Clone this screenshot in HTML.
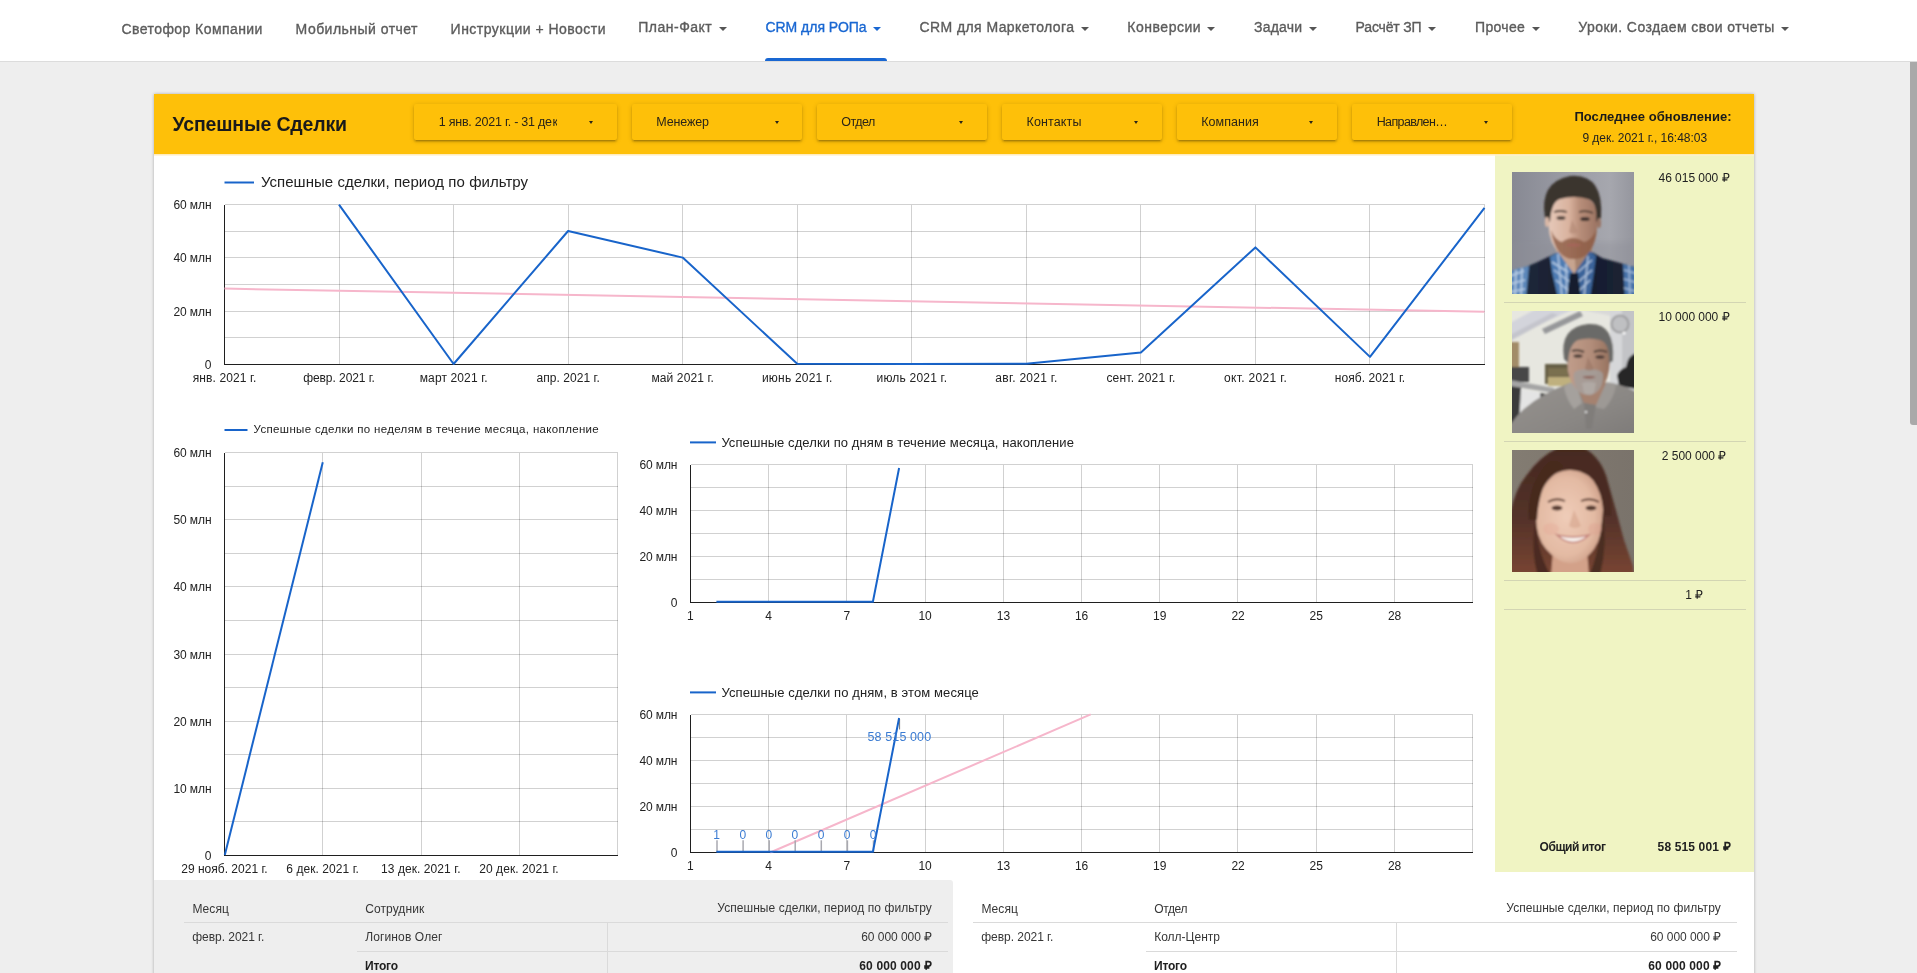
<!DOCTYPE html>
<html lang="ru"><head><meta charset="utf-8"><title>Успешные Сделки</title>
<style>
html,body{margin:0;padding:0}
body{width:1917px;height:973px;overflow:hidden;background:#eeeeee;font-family:"Liberation Sans",sans-serif;position:relative}
.t{position:absolute;white-space:nowrap}
#page{position:absolute;left:0;top:0;width:1917px;height:973px;overflow:hidden;will-change:transform}
.rub{display:inline-block;vertical-align:baseline;overflow:visible}
#topnav{position:absolute;left:0;top:0;width:1917px;height:61px;background:#fff;border-bottom:1px solid #dcdcdc}
#active-ul{position:absolute;left:765px;top:58px;width:122px;height:3px;background:#1967d2;border-radius:3px 3px 0 0}
.caret{position:absolute;width:0;height:0;border-left:4.6px solid transparent;border-right:4.6px solid transparent;border-top:4.9px solid #5f6368}
#scroll{position:absolute;left:1910px;top:62px;width:8px;height:363px;background:#a9a9a9;border-radius:0 0 0 3px}
#canvas{position:absolute;left:153.5px;top:94px;width:1600.6px;height:900px;background:#fff;box-shadow:0 0 3px rgba(0,0,0,.28)}
#bar{position:absolute;left:153.5px;top:94px;width:1600.6px;height:60px;background:#fec009}
#barsh{position:absolute;left:153.5px;top:154px;width:1600.6px;height:2px;background:linear-gradient(to bottom,rgba(255,231,173,1),rgba(255,246,222,.55))}
.flt{position:absolute;top:104px;height:35.6px;background:#fec009;border-radius:2px;box-shadow:0 2px 2px rgba(0,0,0,.14),0 3px 1px -2px rgba(0,0,0,.12),0 1px 5px rgba(0,0,0,.18)}
.fcaret{position:absolute;top:17px;width:0;height:0;border-left:2.8px solid transparent;border-right:2.8px solid transparent;border-top:3px solid #2a2418}
#side{position:absolute;left:1495px;top:154px;width:259px;height:718px;background:#f0f4c3}
.sep{position:absolute;left:9px;width:242px;height:1px;background:#d3d5b3}
.photo{position:absolute;left:17px;width:122px;height:122px;overflow:hidden}
#tbl1bg{position:absolute;left:154px;top:880px;width:799px;height:100px;background:#eeeeee;border-radius:0 3px 0 0}
.hl{position:absolute;height:1px;background:#dadada}
.vl{position:absolute;width:1px;background:#dadada}
#charts{position:absolute;left:0;top:0}
</style></head>
<body>
<div id="page">
<div id="canvas"></div>
<div id="bar"></div>
<div class="t" id="t11" style="top:115px;font-size:19.5px;line-height:19.5px;color:#1a1a1a;font-weight:700;letter-spacing:-0.169px;left:172.6px;">Успешные Сделки</div>
<div class="t" id="t18" style="top:110px;font-size:13px;line-height:13px;color:#1a1a1a;font-weight:700;letter-spacing:0.053px;left:1574.4px;">Последнее обновление:</div>
<div class="t" id="t19" style="top:132px;font-size:12px;line-height:12px;color:#212121;letter-spacing:-0.025px;left:1582.4px;">9 дек. 2021 г., 16:48:03</div>
<div class="flt" style="left:414px;width:203px"><span class="fcaret" style="left:175.3px"></span></div>
<div class="flt" style="left:632px;width:170px"><span class="fcaret" style="left:142.6px"></span></div>
<div class="flt" style="left:817px;width:170px"><span class="fcaret" style="left:142.2px"></span></div>
<div class="flt" style="left:1002px;width:160px"><span class="fcaret" style="left:132.3px"></span></div>
<div class="flt" style="left:1177px;width:160px"><span class="fcaret" style="left:132.2px"></span></div>
<div class="flt" style="left:1352px;width:160px"><span class="fcaret" style="left:132.1px"></span></div>
<div class="t" id="t12" style="top:116px;font-size:12.5px;line-height:12.5px;color:#2a2418;letter-spacing:-0.238px;left:438.8px;">1 янв. 2021 г. - 31 де</div>
<div class="t" id="t13" style="top:116px;font-size:12.5px;line-height:12.5px;color:#2a2418;letter-spacing:-0.133px;left:656.3px;">Менежер</div>
<div class="t" id="t14" style="top:116px;font-size:12.5px;line-height:12.5px;color:#2a2418;letter-spacing:-0.543px;left:841.3px;">Отдел</div>
<div class="t" id="t15" style="top:116px;font-size:12.5px;line-height:12.5px;color:#2a2418;letter-spacing:0.129px;left:1026.5px;">Контакты</div>
<div class="t" id="t16" style="top:116px;font-size:12.5px;line-height:12.5px;color:#2a2418;letter-spacing:0.028px;left:1201.3px;">Компания</div>
<div class="t" id="t17" style="top:116px;font-size:12.5px;line-height:12.5px;color:#2a2418;letter-spacing:-0.628px;left:1376.7px;">Направлен…</div>
<div class="t" style="left:552.4px;top:116px;width:4.2px;overflow:hidden;font-size:12.5px;line-height:12.5px;color:#2a2418">к</div>
<div id="side">
<div class="photo" style="top:18px"><svg width="122" height="122" viewBox="0 0 122 122">
<defs>
<filter id="pb1" x="-10%" y="-10%" width="120%" height="120%"><feGaussianBlur stdDeviation="1.1"/></filter>
<filter id="pb1b" x="-20%" y="-20%" width="140%" height="140%"><feGaussianBlur stdDeviation="2.4"/></filter>
<linearGradient id="pg1" x1="0" x2="1"><stop offset="0" stop-color="#878993"/><stop offset=".45" stop-color="#9a9ba4"/><stop offset=".8" stop-color="#a6a7ae"/><stop offset="1" stop-color="#95969e"/></linearGradient>
<linearGradient id="pf1" x1="0" x2="1"><stop offset="0" stop-color="#e6c9b9"/><stop offset=".42" stop-color="#d9b29e"/><stop offset=".62" stop-color="#b98f7b"/><stop offset="1" stop-color="#9c7462"/></linearGradient>
<linearGradient id="pv1" x1="0" x2="1"><stop offset="0" stop-color="#232c40"/><stop offset=".5" stop-color="#161c2c"/><stop offset="1" stop-color="#1c2336"/></linearGradient>
</defs>
<rect width="122" height="122" fill="url(#pg1)"/>
<rect y="70" width="122" height="52" fill="#8d8e97" opacity=".35" filter="url(#pb1b)"/>
<g filter="url(#pb1)">
<path d="M-4,126 L-4,101 Q14,96 36,85 L46,80 L80,80 L90,86 Q112,92 126,96 L126,126Z" fill="url(#pv1)"/>
<path d="M-4,126 L-4,100 Q6,96 17,94 L14,126Z" fill="#5c87ba"/>
<path d="M-2,104 L12,99 M-2,112 L13,108 M-2,120 L13,117 M4,98 L3,126 M10,96 L9,126" stroke="#d5e2f2" stroke-width="1.6" fill="none" opacity=".8"/>
<path d="M126,126 L126,96 Q119,94 111,92 L113,126Z" fill="#4772a8"/>
<path d="M112,98 L126,102 M112,107 L126,111 M112,116 L126,120 M117,93 L118,126" stroke="#c9d9ee" stroke-width="1.5" fill="none" opacity=".7"/>
<path d="M44,70 L80,70 L80,90 L62,104 L45,92Z" fill="#c7a48f"/>
<path d="M62,74 L80,72 L80,90 L64,102Z" fill="#9a7560" opacity=".7"/>
<path d="M38,85 L46,80 L62,102 L58,126 L46,126 L40,100Z" fill="#4d7cb3"/>
<path d="M84,84 L78,79 L62,102 L66,126 L78,126 L82,100Z" fill="#3a639a"/>
<path d="M40,90 L56,100 M42,98 L58,110 M44,108 L58,120 M46,82 L50,126 M54,92 L55,126 M80,88 L66,100 M80,98 L66,110 M78,108 L66,120 M76,84 L72,126" stroke="#dbe7f5" stroke-width="1.5" fill="none" opacity=".75"/>
<path d="M58,101 L66,101 L69,126 L55,126Z" fill="#141b2e"/>
<path d="M37,44 Q35,64 43,76 Q52,88 62,87 Q73,87 80,76 Q87,62 85,42 Q84,24 61,23 Q38,24 37,44Z" fill="url(#pf1)"/>
<path d="M39,58 Q41,72 47,80 Q54,88 62,87 Q71,88 78,79 Q84,70 84,58 Q80,68 72,70 Q66,66 61,66 Q55,66 50,70 Q43,68 39,58Z" fill="#8a5a42" opacity=".78"/>
<path d="M53,73 Q61,70 70,73 Q61,76 53,73Z" fill="#a6655a"/>
<path d="M33,46 Q27,10 58,4 Q92,1 89,46 L84,50 Q86,30 76,27 Q62,23 48,27 Q39,30 38,50Z" fill="#3a342f"/>
<path d="M42,40 Q48,38 55,40 M67,40 Q74,38 81,41" stroke="#4a3a32" stroke-width="1.8" fill="none"/>
<ellipse cx="49" cy="46" rx="4.5" ry="1.9" fill="#55463f"/><ellipse cx="73" cy="47" rx="4.8" ry="2" fill="#3e322e"/>
<path d="M60,48 L57,60 Q61,63 66,60Z" fill="#b58c78" opacity=".7"/>
<ellipse cx="35" cy="50" rx="2.2" ry="5" fill="#d9b7a6"/><ellipse cx="87" cy="51" rx="2" ry="5" fill="#9a7464"/>
</g></svg></div>
<div class="photo" style="top:157px"><svg width="122" height="122" viewBox="0 0 122 122">
<defs><filter id="pb2" x="-10%" y="-10%" width="120%" height="120%"><feGaussianBlur stdDeviation="1.1"/></filter>
<linearGradient id="pf2" x1="0" x2="1"><stop offset="0" stop-color="#c09d8b"/><stop offset=".55" stop-color="#b28d7a"/><stop offset="1" stop-color="#96725f"/></linearGradient>
<linearGradient id="ps2" x1="0" y1="0" x2="1" y2="1"><stop offset="0" stop-color="#97938f"/><stop offset=".6" stop-color="#8a8784"/><stop offset="1" stop-color="#7d7a78"/></linearGradient>
</defs>
<rect width="122" height="122" fill="#e7e7e0"/>
<g filter="url(#pb2)">
<path d="M-2,-2 L124,-2 L124,10 L66,-2Z" fill="#d9d9d8"/>
<path d="M-2,12 L24,-2 L62,-2 L-2,27Z" fill="#d3d4db"/>
<path d="M-2,24 L40,2 L46,4 L-2,30Z" fill="#c4c5cc"/>
<path d="M30,18 L68,0 L71,5 L33,23Z" fill="#96979a"/>
<rect x="98" y="-2" width="28" height="84" fill="#d6d7d9"/>
<rect x="110" y="-2" width="14" height="60" fill="#c3c4c7"/>
<circle cx="108" cy="13" r="8.5" fill="#bfc0c2" stroke="#9c9c9e" stroke-width="2"/>
<circle cx="112" cy="22" r="1.6" fill="#fff"/>
<rect x="-2" y="31" width="9" height="25" fill="#a28c68"/>
<rect x="-2" y="56" width="19" height="15" fill="#474747"/>
<rect x="-2" y="71" width="11" height="42" fill="#3b3b3b"/>
<rect x="33" y="53" width="25" height="20" fill="#655d45"/>
<rect x="36" y="57" width="20" height="8" fill="#7a7050"/>
<rect x="36" y="66" width="24" height="9" fill="#bfb07e"/>
<path d="M-2,69 L42,77 L42,82 L-2,75Z" fill="#a4a4a4"/>
<path d="M9,78 L30,82 L26,112 L7,112Z" fill="#e4e4e4"/>
<path d="M28,82 L40,84 L38,92 L29,90Z" fill="#3d3d3d"/>
<path d="M105,64 Q108,58 114,56 Q116,44 124,42 L124,78 L107,75Z" fill="#262626"/>
<path d="M-4,126 L-2,114 Q10,96 32,84 Q44,77 58,72 L100,72 Q114,75 126,82 L126,126Z" fill="url(#ps2)"/>
<path d="M52,76 Q58,70 64,72 L70,92 L62,98 Q54,88 52,76Z" fill="#a5a19d"/>
<path d="M104,74 Q98,70 92,72 L82,96 L92,98 Q102,88 104,74Z" fill="#9d9995"/>
<path d="M64,74 L94,72 L84,94 L72,92Z" fill="#a5826f"/>
<path d="M72,92 L84,94 L80,118 L74,118Z" fill="#807d7a"/>
<circle cx="74" cy="101" r="1.3" fill="#d8d8d8"/>
<path d="M56,44 Q54,62 60,72 Q68,85 77,84 Q87,84 93,72 Q99,60 98,42 Q96,25 77,25 Q58,26 56,44Z" fill="url(#pf2)"/>
<path d="M62,62 Q64,58 77,58 Q89,58 91,63 Q92,74 86,80 Q80,85 76,84 Q68,84 64,77 Q61,70 62,62Z" fill="#a39e9b" opacity=".8"/>
<path d="M67,62 Q77,57 87,62 Q77,65 67,62Z" fill="#a59c96"/>
<path d="M70,66 Q77,64 84,66 Q77,69 70,66Z" fill="#8c6258"/>
<path d="M70,72 Q77,70 84,72 L82,82 Q77,85 72,82Z" fill="#b3aca8" opacity=".8"/>
<path d="M52,48 Q47,16 76,13 Q104,11 101,50 L97,52 Q98,32 88,29 Q77,26 66,29 Q57,33 56,52Z" fill="#6b6a68"/>
<path d="M60,40 Q66,38 72,41 M82,41 Q88,38 95,41" stroke="#4a3c36" stroke-width="2" fill="none"/>
<ellipse cx="66" cy="45" rx="4.6" ry="1.8" fill="#4e3d37"/><ellipse cx="88" cy="46" rx="4.6" ry="1.8" fill="#4e3d37"/>
<path d="M76,46 L73,58 Q77,61 82,58Z" fill="#9d7867" opacity=".7"/>
</g></svg></div>
<div class="photo" style="top:296px"><svg width="122" height="122" viewBox="0 0 122 122">
<defs><filter id="pb3" x="-10%" y="-10%" width="120%" height="120%"><feGaussianBlur stdDeviation="1.1"/></filter>
<radialGradient id="pf3" cx=".45" cy=".5" r=".6"><stop offset="0" stop-color="#efccb8"/><stop offset=".7" stop-color="#e3baa3"/><stop offset="1" stop-color="#cb9c86"/></radialGradient>
<linearGradient id="ph3" x1="0" y1="0" x2="0" y2="1"><stop offset="0" stop-color="#46291f"/><stop offset=".55" stop-color="#54322a"/><stop offset="1" stop-color="#7a4632"/></linearGradient>
<linearGradient id="pg3" x1="0" x2="1"><stop offset="0" stop-color="#837c72"/><stop offset="1" stop-color="#7a736b"/></linearGradient>
</defs>
<rect width="122" height="122" fill="url(#pg3)"/>
<g filter="url(#pb3)">
<path d="M-4,126 L-3,70 Q2,40 14,26 Q28,6 46,-2 L72,-2 Q90,8 96,32 Q104,60 112,90 L121,116 L122,126Z" fill="url(#ph3)"/>
<path d="M41,100 L75,100 L77,126 L39,126Z" fill="#d3a189"/>
<path d="M24,62 Q23,86 34,99 Q46,113 58,113 Q72,113 82,99 Q92,84 91,60 Q90,36 77,26 Q60,15 43,24 Q27,36 24,62Z" fill="url(#pf3)"/>
<path d="M52,17 Q38,22 31,38 Q26,52 25,70 L17,70 Q14,38 34,14 Q44,6 52,17Z" fill="#47291f"/>
<path d="M50,18 Q68,14 81,30 Q91,44 92,66 L99,66 Q100,36 86,18 Q68,4 50,18Z" fill="#4a2c22"/>
<path d="M91,60 Q96,92 88,126 L77,126 Q88,100 91,60Z" fill="#4b2d23"/>
<path d="M24,68 Q24,100 39,126 L26,126 Q18,100 24,68Z" fill="#4b2c22"/>
<path d="M36,52 Q44,47 53,51 M69,51 Q78,47 87,52" stroke="#5a3a2e" stroke-width="1.9" fill="none"/>
<ellipse cx="45" cy="58" rx="5.4" ry="2.4" fill="#54392f"/><ellipse cx="79" cy="58" rx="5.4" ry="2.4" fill="#54392f"/>
<path d="M62,60 L57,76 Q63,80 69,76Z" fill="#d6a48c" opacity=".6"/>
<ellipse cx="39" cy="79" rx="8" ry="6" fill="#e6a696" opacity=".35"/><ellipse cx="83" cy="79" rx="7" ry="6" fill="#dd9d8d" opacity=".35"/>
<path d="M45,85 Q61,100 77,85 Q61,89 45,85Z" fill="#f7f1ec" stroke="#c4827a" stroke-width="1.6"/>
</g></svg></div>
<div class="sep" style="top:148px"></div>
<div class="sep" style="top:287px"></div>
<div class="sep" style="top:426px"></div>
<div class="sep" style="top:455px"></div>
</div>
<div class="t" id="t86" style="top:172px;font-size:12px;line-height:12px;color:#212121;letter-spacing:-0.037px;left:1393.8px;width:600px;text-align:center;">46 015 000 <svg class="rub" width="7.5" height="8.7" viewBox="0 0 7.5 8.7" aria-label="₽"><path d="M2.2,8.7 V0.55 H4.6 A2.25,2.25 0 0 1 4.6,5.05 H0.2 M0.2,6.95 H5.4" fill="none" stroke="currentColor" stroke-width="1.15"/></svg></div>
<div class="t" id="t87" style="top:311px;font-size:12px;line-height:12px;color:#212121;letter-spacing:-0.037px;left:1393.8px;width:600px;text-align:center;">10 000 000 <svg class="rub" width="7.5" height="8.7" viewBox="0 0 7.5 8.7" aria-label="₽"><path d="M2.2,8.7 V0.55 H4.6 A2.25,2.25 0 0 1 4.6,5.05 H0.2 M0.2,6.95 H5.4" fill="none" stroke="currentColor" stroke-width="1.15"/></svg></div>
<div class="t" id="t88" style="top:450px;font-size:12px;line-height:12px;color:#212121;letter-spacing:-0.022px;left:1393.8px;width:600px;text-align:center;">2 500 000 <svg class="rub" width="7.5" height="8.7" viewBox="0 0 7.5 8.7" aria-label="₽"><path d="M2.2,8.7 V0.55 H4.6 A2.25,2.25 0 0 1 4.6,5.05 H0.2 M0.2,6.95 H5.4" fill="none" stroke="currentColor" stroke-width="1.15"/></svg></div>
<div class="t" id="t89" style="top:589px;font-size:12px;line-height:12px;color:#212121;letter-spacing:-0.258px;left:1393.8px;width:600px;text-align:center;">1 <svg class="rub" width="7.5" height="8.7" viewBox="0 0 7.5 8.7" aria-label="₽"><path d="M2.2,8.7 V0.55 H4.6 A2.25,2.25 0 0 1 4.6,5.05 H0.2 M0.2,6.95 H5.4" fill="none" stroke="currentColor" stroke-width="1.15"/></svg></div>
<div class="t" id="t90" style="top:841px;font-size:12px;line-height:12px;color:#212121;font-weight:700;letter-spacing:-0.432px;left:1539.5px;">Общий итог</div>
<div class="t" id="t91" style="top:841px;font-size:12px;line-height:12px;color:#212121;font-weight:700;letter-spacing:0.136px;right:187.0px;">58 515 001 <svg class="rub" width="7.5" height="8.7" viewBox="0 0 7.5 8.7" aria-label="₽"><path d="M2.2,8.7 V0.55 H4.6 A2.25,2.25 0 0 1 4.6,5.05 H0.2 M0.2,6.95 H5.4" fill="none" stroke="currentColor" stroke-width="1.7"/></svg></div>
<div id="barsh"></div>
<svg id="charts" width="1917" height="973" viewBox="0 0 1917 973">
<g id="chart1" shape-rendering="crispEdges">
<line x1="224.5" y1="204.5" x2="1484.5" y2="204.5" stroke="rgba(0,0,0,.18)" stroke-width="1"/>
<line x1="224.5" y1="231.5" x2="1484.5" y2="231.5" stroke="rgba(0,0,0,.18)" stroke-width="1"/>
<line x1="224.5" y1="257.5" x2="1484.5" y2="257.5" stroke="rgba(0,0,0,.18)" stroke-width="1"/>
<line x1="224.5" y1="284.5" x2="1484.5" y2="284.5" stroke="rgba(0,0,0,.18)" stroke-width="1"/>
<line x1="224.5" y1="311.5" x2="1484.5" y2="311.5" stroke="rgba(0,0,0,.18)" stroke-width="1"/>
<line x1="224.5" y1="337.5" x2="1484.5" y2="337.5" stroke="rgba(0,0,0,.18)" stroke-width="1"/>
<line x1="224.5" y1="364.5" x2="1484.5" y2="364.5" stroke="rgba(0,0,0,.18)" stroke-width="1"/>
<line x1="339.5" y1="204.5" x2="339.5" y2="364.5" stroke="rgba(0,0,0,.18)" stroke-width="1"/>
<line x1="453.5" y1="204.5" x2="453.5" y2="364.5" stroke="rgba(0,0,0,.18)" stroke-width="1"/>
<line x1="568.5" y1="204.5" x2="568.5" y2="364.5" stroke="rgba(0,0,0,.18)" stroke-width="1"/>
<line x1="682.5" y1="204.5" x2="682.5" y2="364.5" stroke="rgba(0,0,0,.18)" stroke-width="1"/>
<line x1="797.5" y1="204.5" x2="797.5" y2="364.5" stroke="rgba(0,0,0,.18)" stroke-width="1"/>
<line x1="911.5" y1="204.5" x2="911.5" y2="364.5" stroke="rgba(0,0,0,.18)" stroke-width="1"/>
<line x1="1026.5" y1="204.5" x2="1026.5" y2="364.5" stroke="rgba(0,0,0,.18)" stroke-width="1"/>
<line x1="1140.5" y1="204.5" x2="1140.5" y2="364.5" stroke="rgba(0,0,0,.18)" stroke-width="1"/>
<line x1="1255.5" y1="204.5" x2="1255.5" y2="364.5" stroke="rgba(0,0,0,.18)" stroke-width="1"/>
<line x1="1369.5" y1="204.5" x2="1369.5" y2="364.5" stroke="rgba(0,0,0,.18)" stroke-width="1"/>
<line x1="1484.5" y1="204.5" x2="1484.5" y2="364.5" stroke="rgba(0,0,0,.18)" stroke-width="1"/>
<line x1="224.5" y1="204.5" x2="224.5" y2="365.0" stroke="#1f1f1f" stroke-width="1"/>
<line x1="224.5" y1="364.5" x2="1484.5" y2="364.5" stroke="#1f1f1f" stroke-width="1"/>
</g>
<line x1="224.5" y1="288.6" x2="1484.5" y2="311.8" stroke="#f6b6cb" stroke-width="2"/>
<polyline fill="none" stroke="#1864ca" stroke-width="2" stroke-linejoin="round" points="339.0,204.6 453.6,364.0 568.1,231.0 682.7,257.6 797.2,363.8 911.8,364.0 1026.3,363.8 1140.9,352.6 1255.4,247.4 1370.0,356.9 1484.5,207.9"/>
<line x1="224.5" y1="182.5" x2="254" y2="182.5" stroke="#1864ca" stroke-width="2"/>
<g id="chart2" shape-rendering="crispEdges">
<line x1="224.5" y1="452.5" x2="617.5" y2="452.5" stroke="rgba(0,0,0,.18)" stroke-width="1"/>
<line x1="224.5" y1="486.5" x2="617.5" y2="486.5" stroke="rgba(0,0,0,.18)" stroke-width="1"/>
<line x1="224.5" y1="519.5" x2="617.5" y2="519.5" stroke="rgba(0,0,0,.18)" stroke-width="1"/>
<line x1="224.5" y1="553.5" x2="617.5" y2="553.5" stroke="rgba(0,0,0,.18)" stroke-width="1"/>
<line x1="224.5" y1="586.5" x2="617.5" y2="586.5" stroke="rgba(0,0,0,.18)" stroke-width="1"/>
<line x1="224.5" y1="620.5" x2="617.5" y2="620.5" stroke="rgba(0,0,0,.18)" stroke-width="1"/>
<line x1="224.5" y1="654.5" x2="617.5" y2="654.5" stroke="rgba(0,0,0,.18)" stroke-width="1"/>
<line x1="224.5" y1="687.5" x2="617.5" y2="687.5" stroke="rgba(0,0,0,.18)" stroke-width="1"/>
<line x1="224.5" y1="721.5" x2="617.5" y2="721.5" stroke="rgba(0,0,0,.18)" stroke-width="1"/>
<line x1="224.5" y1="754.5" x2="617.5" y2="754.5" stroke="rgba(0,0,0,.18)" stroke-width="1"/>
<line x1="224.5" y1="788.5" x2="617.5" y2="788.5" stroke="rgba(0,0,0,.18)" stroke-width="1"/>
<line x1="224.5" y1="821.5" x2="617.5" y2="821.5" stroke="rgba(0,0,0,.18)" stroke-width="1"/>
<line x1="224.5" y1="855.5" x2="617.5" y2="855.5" stroke="rgba(0,0,0,.18)" stroke-width="1"/>
<line x1="322.5" y1="452.5" x2="322.5" y2="855.5" stroke="rgba(0,0,0,.18)" stroke-width="1"/>
<line x1="421.5" y1="452.5" x2="421.5" y2="855.5" stroke="rgba(0,0,0,.18)" stroke-width="1"/>
<line x1="519.5" y1="452.5" x2="519.5" y2="855.5" stroke="rgba(0,0,0,.18)" stroke-width="1"/>
<line x1="617.5" y1="452.5" x2="617.5" y2="855.5" stroke="rgba(0,0,0,.18)" stroke-width="1"/>
<line x1="224.5" y1="452.5" x2="224.5" y2="856.0" stroke="#1f1f1f" stroke-width="1"/>
<line x1="224.5" y1="855.5" x2="617.5" y2="855.5" stroke="#1f1f1f" stroke-width="1"/>
</g>
<line x1="224.8" y1="855" x2="322.8" y2="462.3" stroke="#1864ca" stroke-width="2"/>
<line x1="224.5" y1="430" x2="247.5" y2="430" stroke="#1864ca" stroke-width="2"/>
<g id="chart3" shape-rendering="crispEdges">
<line x1="690.5" y1="464.5" x2="1472.5" y2="464.5" stroke="rgba(0,0,0,.18)" stroke-width="1"/>
<line x1="690.5" y1="487.5" x2="1472.5" y2="487.5" stroke="rgba(0,0,0,.18)" stroke-width="1"/>
<line x1="690.5" y1="510.5" x2="1472.5" y2="510.5" stroke="rgba(0,0,0,.18)" stroke-width="1"/>
<line x1="690.5" y1="533.5" x2="1472.5" y2="533.5" stroke="rgba(0,0,0,.18)" stroke-width="1"/>
<line x1="690.5" y1="556.5" x2="1472.5" y2="556.5" stroke="rgba(0,0,0,.18)" stroke-width="1"/>
<line x1="690.5" y1="579.5" x2="1472.5" y2="579.5" stroke="rgba(0,0,0,.18)" stroke-width="1"/>
<line x1="690.5" y1="602.5" x2="1472.5" y2="602.5" stroke="rgba(0,0,0,.18)" stroke-width="1"/>
<line x1="768.5" y1="464.5" x2="768.5" y2="602.5" stroke="rgba(0,0,0,.18)" stroke-width="1"/>
<line x1="846.5" y1="464.5" x2="846.5" y2="602.5" stroke="rgba(0,0,0,.18)" stroke-width="1"/>
<line x1="925.5" y1="464.5" x2="925.5" y2="602.5" stroke="rgba(0,0,0,.18)" stroke-width="1"/>
<line x1="1003.5" y1="464.5" x2="1003.5" y2="602.5" stroke="rgba(0,0,0,.18)" stroke-width="1"/>
<line x1="1081.5" y1="464.5" x2="1081.5" y2="602.5" stroke="rgba(0,0,0,.18)" stroke-width="1"/>
<line x1="1159.5" y1="464.5" x2="1159.5" y2="602.5" stroke="rgba(0,0,0,.18)" stroke-width="1"/>
<line x1="1237.5" y1="464.5" x2="1237.5" y2="602.5" stroke="rgba(0,0,0,.18)" stroke-width="1"/>
<line x1="1316.5" y1="464.5" x2="1316.5" y2="602.5" stroke="rgba(0,0,0,.18)" stroke-width="1"/>
<line x1="1394.5" y1="464.5" x2="1394.5" y2="602.5" stroke="rgba(0,0,0,.18)" stroke-width="1"/>
<line x1="1472.5" y1="464.5" x2="1472.5" y2="602.5" stroke="rgba(0,0,0,.18)" stroke-width="1"/>
<line x1="690.5" y1="464.5" x2="690.5" y2="603.0" stroke="#1f1f1f" stroke-width="1"/>
<line x1="690.5" y1="602.5" x2="1472.5" y2="602.5" stroke="#1f1f1f" stroke-width="1"/>
</g>
<polyline fill="none" stroke="#1864ca" stroke-width="2" stroke-linejoin="miter" points="716.4,601.8 872.9,601.8 899.1,468"/>
<line x1="690" y1="442.4" x2="716" y2="442.4" stroke="#1864ca" stroke-width="2"/>
<g id="chart4" shape-rendering="crispEdges">
<line x1="690.5" y1="714.5" x2="1472.5" y2="714.5" stroke="rgba(0,0,0,.18)" stroke-width="1"/>
<line x1="690.5" y1="737.5" x2="1472.5" y2="737.5" stroke="rgba(0,0,0,.18)" stroke-width="1"/>
<line x1="690.5" y1="760.5" x2="1472.5" y2="760.5" stroke="rgba(0,0,0,.18)" stroke-width="1"/>
<line x1="690.5" y1="783.5" x2="1472.5" y2="783.5" stroke="rgba(0,0,0,.18)" stroke-width="1"/>
<line x1="690.5" y1="806.5" x2="1472.5" y2="806.5" stroke="rgba(0,0,0,.18)" stroke-width="1"/>
<line x1="690.5" y1="829.5" x2="1472.5" y2="829.5" stroke="rgba(0,0,0,.18)" stroke-width="1"/>
<line x1="690.5" y1="852.5" x2="1472.5" y2="852.5" stroke="rgba(0,0,0,.18)" stroke-width="1"/>
<line x1="768.5" y1="714.5" x2="768.5" y2="852.5" stroke="rgba(0,0,0,.18)" stroke-width="1"/>
<line x1="846.5" y1="714.5" x2="846.5" y2="852.5" stroke="rgba(0,0,0,.18)" stroke-width="1"/>
<line x1="925.5" y1="714.5" x2="925.5" y2="852.5" stroke="rgba(0,0,0,.18)" stroke-width="1"/>
<line x1="1003.5" y1="714.5" x2="1003.5" y2="852.5" stroke="rgba(0,0,0,.18)" stroke-width="1"/>
<line x1="1081.5" y1="714.5" x2="1081.5" y2="852.5" stroke="rgba(0,0,0,.18)" stroke-width="1"/>
<line x1="1159.5" y1="714.5" x2="1159.5" y2="852.5" stroke="rgba(0,0,0,.18)" stroke-width="1"/>
<line x1="1237.5" y1="714.5" x2="1237.5" y2="852.5" stroke="rgba(0,0,0,.18)" stroke-width="1"/>
<line x1="1316.5" y1="714.5" x2="1316.5" y2="852.5" stroke="rgba(0,0,0,.18)" stroke-width="1"/>
<line x1="1394.5" y1="714.5" x2="1394.5" y2="852.5" stroke="rgba(0,0,0,.18)" stroke-width="1"/>
<line x1="1472.5" y1="714.5" x2="1472.5" y2="852.5" stroke="rgba(0,0,0,.18)" stroke-width="1"/>
<line x1="690.5" y1="714.5" x2="690.5" y2="853.0" stroke="#1f1f1f" stroke-width="1"/>
<line x1="690.5" y1="852.5" x2="1472.5" y2="852.5" stroke="#1f1f1f" stroke-width="1"/>
</g>
<line x1="770.2" y1="852.5" x2="1090.7" y2="714.4" stroke="#f6b6cb" stroke-width="2"/>
<line x1="899.6" y1="719" x2="899.6" y2="729.5" stroke="#777" stroke-width="1"/>
<line x1="717.0" y1="840.3" x2="717.0" y2="852" stroke="#a9a9b0" stroke-width="1.5"/>
<line x1="743.1" y1="840.3" x2="743.1" y2="852" stroke="#a9a9b0" stroke-width="1.5"/>
<line x1="769.2" y1="840.3" x2="769.2" y2="852" stroke="#a9a9b0" stroke-width="1.5"/>
<line x1="795.2" y1="840.3" x2="795.2" y2="852" stroke="#a9a9b0" stroke-width="1.5"/>
<line x1="821.3" y1="840.3" x2="821.3" y2="852" stroke="#a9a9b0" stroke-width="1.5"/>
<line x1="847.4" y1="840.3" x2="847.4" y2="852" stroke="#a9a9b0" stroke-width="1.5"/>
<line x1="873.5" y1="840.3" x2="873.5" y2="852" stroke="#a9a9b0" stroke-width="1.5"/>
<polyline fill="none" stroke="#1864ca" stroke-width="2" stroke-linejoin="miter" points="716.4,851.8 872.9,851.8 899.1,718"/>
<line x1="690" y1="692.4" x2="716" y2="692.4" stroke="#1864ca" stroke-width="2"/>
</svg>
<div class="t" id="t20" style="top:174px;font-size:15px;line-height:15px;color:#212121;letter-spacing:0.047px;left:260.9px;">Успешные сделки, период по фильтру</div>
<div class="t" id="t21" style="top:199px;font-size:12px;line-height:12px;color:#222222;letter-spacing:-0.113px;right:1705.6px;">60 млн</div>
<div class="t" id="t22" style="top:252px;font-size:12px;line-height:12px;color:#222222;letter-spacing:-0.113px;right:1705.6px;">40 млн</div>
<div class="t" id="t23" style="top:306px;font-size:12px;line-height:12px;color:#222222;letter-spacing:-0.113px;right:1705.6px;">20 млн</div>
<div class="t" id="t24" style="top:359px;font-size:12px;line-height:12px;color:#222222;right:1705.5px;">0</div>
<div class="t" id="t25" style="top:372px;font-size:12px;line-height:12px;color:#222222;letter-spacing:0.122px;left:-75.4px;width:600px;text-align:center;">янв. 2021 г.</div>
<div class="t" id="t26" style="top:372px;font-size:12px;line-height:12px;color:#222222;letter-spacing:-0.062px;left:39.0px;width:600px;text-align:center;">февр. 2021 г.</div>
<div class="t" id="t27" style="top:372px;font-size:12px;line-height:12px;color:#222222;letter-spacing:0.122px;left:153.7px;width:600px;text-align:center;">март 2021 г.</div>
<div class="t" id="t28" style="top:372px;font-size:12px;line-height:12px;color:#222222;letter-spacing:0.064px;left:268.2px;width:600px;text-align:center;">апр. 2021 г.</div>
<div class="t" id="t29" style="top:372px;font-size:12px;line-height:12px;color:#222222;letter-spacing:0.125px;left:382.7px;width:600px;text-align:center;">май 2021 г.</div>
<div class="t" id="t30" style="top:372px;font-size:12px;line-height:12px;color:#222222;letter-spacing:0.209px;left:497.3px;width:600px;text-align:center;">июнь 2021 г.</div>
<div class="t" id="t31" style="top:372px;font-size:12px;line-height:12px;color:#222222;letter-spacing:0.199px;left:611.9px;width:600px;text-align:center;">июль 2021 г.</div>
<div class="t" id="t32" style="top:372px;font-size:12px;line-height:12px;color:#222222;letter-spacing:0.281px;left:726.5px;width:600px;text-align:center;">авг. 2021 г.</div>
<div class="t" id="t33" style="top:372px;font-size:12px;line-height:12px;color:#222222;letter-spacing:0.215px;left:841.0px;width:600px;text-align:center;">сент. 2021 г.</div>
<div class="t" id="t34" style="top:372px;font-size:12px;line-height:12px;color:#222222;letter-spacing:0.348px;left:955.6px;width:600px;text-align:center;">окт. 2021 г.</div>
<div class="t" id="t35" style="top:372px;font-size:12px;line-height:12px;color:#222222;letter-spacing:0.073px;left:1070.0px;width:600px;text-align:center;">нояб. 2021 г.</div>
<div class="t" id="t36" style="top:424px;font-size:11.5px;line-height:11.5px;color:#212121;letter-spacing:0.338px;left:253.6px;">Успешные сделки по неделям в течение месяца, накопление</div>
<div class="t" id="t37" style="top:447px;font-size:12px;line-height:12px;color:#222222;letter-spacing:-0.113px;right:1705.6px;">60 млн</div>
<div class="t" id="t38" style="top:514px;font-size:12px;line-height:12px;color:#222222;letter-spacing:-0.113px;right:1705.6px;">50 млн</div>
<div class="t" id="t39" style="top:581px;font-size:12px;line-height:12px;color:#222222;letter-spacing:-0.113px;right:1705.6px;">40 млн</div>
<div class="t" id="t40" style="top:649px;font-size:12px;line-height:12px;color:#222222;letter-spacing:-0.113px;right:1705.6px;">30 млн</div>
<div class="t" id="t41" style="top:716px;font-size:12px;line-height:12px;color:#222222;letter-spacing:-0.113px;right:1705.6px;">20 млн</div>
<div class="t" id="t42" style="top:783px;font-size:12px;line-height:12px;color:#222222;letter-spacing:-0.113px;right:1705.6px;">10 млн</div>
<div class="t" id="t43" style="top:850px;font-size:12px;line-height:12px;color:#222222;right:1705.5px;">0</div>
<div class="t" id="t44" style="top:863px;font-size:12px;line-height:12px;color:#222222;letter-spacing:0.007px;left:-75.5px;width:600px;text-align:center;">29 нояб. 2021 г.</div>
<div class="t" id="t45" style="top:863px;font-size:12px;line-height:12px;color:#222222;letter-spacing:0.055px;left:22.7px;width:600px;text-align:center;">6 дек. 2021 г.</div>
<div class="t" id="t46" style="top:863px;font-size:12px;line-height:12px;color:#222222;letter-spacing:0.067px;left:120.8px;width:600px;text-align:center;">13 дек. 2021 г.</div>
<div class="t" id="t47" style="top:863px;font-size:12px;line-height:12px;color:#222222;letter-spacing:0.067px;left:219.0px;width:600px;text-align:center;">20 дек. 2021 г.</div>
<div class="t" id="t48" style="top:436px;font-size:13px;line-height:13px;color:#212121;letter-spacing:0.084px;left:721.4px;">Успешные сделки по дням в течение месяца, накопление</div>
<div class="t" id="t49" style="top:459px;font-size:12px;line-height:12px;color:#222222;letter-spacing:-0.113px;right:1239.7px;">60 млн</div>
<div class="t" id="t50" style="top:505px;font-size:12px;line-height:12px;color:#222222;letter-spacing:-0.113px;right:1239.7px;">40 млн</div>
<div class="t" id="t51" style="top:551px;font-size:12px;line-height:12px;color:#222222;letter-spacing:-0.113px;right:1239.7px;">20 млн</div>
<div class="t" id="t52" style="top:597px;font-size:12px;line-height:12px;color:#222222;right:1239.6px;">0</div>
<div class="t" id="t53" style="top:610px;font-size:12px;line-height:12px;color:#222222;left:390.4px;width:600px;text-align:center;">1</div>
<div class="t" id="t54" style="top:610px;font-size:12px;line-height:12px;color:#222222;left:468.6px;width:600px;text-align:center;">4</div>
<div class="t" id="t55" style="top:610px;font-size:12px;line-height:12px;color:#222222;left:546.9px;width:600px;text-align:center;">7</div>
<div class="t" id="t56" style="top:610px;font-size:12px;line-height:12px;color:#222222;left:625.1px;width:600px;text-align:center;">10</div>
<div class="t" id="t57" style="top:610px;font-size:12px;line-height:12px;color:#222222;left:703.4px;width:600px;text-align:center;">13</div>
<div class="t" id="t58" style="top:610px;font-size:12px;line-height:12px;color:#222222;left:781.6px;width:600px;text-align:center;">16</div>
<div class="t" id="t59" style="top:610px;font-size:12px;line-height:12px;color:#222222;left:859.8px;width:600px;text-align:center;">19</div>
<div class="t" id="t60" style="top:610px;font-size:12px;line-height:12px;color:#222222;left:938.1px;width:600px;text-align:center;">22</div>
<div class="t" id="t61" style="top:610px;font-size:12px;line-height:12px;color:#222222;left:1016.3px;width:600px;text-align:center;">25</div>
<div class="t" id="t62" style="top:610px;font-size:12px;line-height:12px;color:#222222;left:1094.6px;width:600px;text-align:center;">28</div>
<div class="t" id="t63" style="top:686px;font-size:13px;line-height:13px;color:#212121;letter-spacing:0.105px;left:721.4px;">Успешные сделки по дням, в этом месяце</div>
<div class="t" id="t64" style="top:709px;font-size:12px;line-height:12px;color:#222222;letter-spacing:-0.113px;right:1239.7px;">60 млн</div>
<div class="t" id="t65" style="top:755px;font-size:12px;line-height:12px;color:#222222;letter-spacing:-0.113px;right:1239.7px;">40 млн</div>
<div class="t" id="t66" style="top:801px;font-size:12px;line-height:12px;color:#222222;letter-spacing:-0.113px;right:1239.7px;">20 млн</div>
<div class="t" id="t67" style="top:847px;font-size:12px;line-height:12px;color:#222222;right:1239.6px;">0</div>
<div class="t" id="t68" style="top:860px;font-size:12px;line-height:12px;color:#222222;left:390.4px;width:600px;text-align:center;">1</div>
<div class="t" id="t69" style="top:860px;font-size:12px;line-height:12px;color:#222222;left:468.6px;width:600px;text-align:center;">4</div>
<div class="t" id="t70" style="top:860px;font-size:12px;line-height:12px;color:#222222;left:546.9px;width:600px;text-align:center;">7</div>
<div class="t" id="t71" style="top:860px;font-size:12px;line-height:12px;color:#222222;left:625.1px;width:600px;text-align:center;">10</div>
<div class="t" id="t72" style="top:860px;font-size:12px;line-height:12px;color:#222222;left:703.4px;width:600px;text-align:center;">13</div>
<div class="t" id="t73" style="top:860px;font-size:12px;line-height:12px;color:#222222;left:781.6px;width:600px;text-align:center;">16</div>
<div class="t" id="t74" style="top:860px;font-size:12px;line-height:12px;color:#222222;left:859.8px;width:600px;text-align:center;">19</div>
<div class="t" id="t75" style="top:860px;font-size:12px;line-height:12px;color:#222222;left:938.1px;width:600px;text-align:center;">22</div>
<div class="t" id="t76" style="top:860px;font-size:12px;line-height:12px;color:#222222;left:1016.3px;width:600px;text-align:center;">25</div>
<div class="t" id="t77" style="top:860px;font-size:12px;line-height:12px;color:#222222;left:1094.6px;width:600px;text-align:center;">28</div>
<div class="t" id="t78" style="top:829px;font-size:12px;line-height:12px;color:#3a7bd2;left:416.7px;width:600px;text-align:center;">1</div>
<div class="t" id="t79" style="top:829px;font-size:12px;line-height:12px;color:#3a7bd2;left:442.8px;width:600px;text-align:center;">0</div>
<div class="t" id="t80" style="top:829px;font-size:12px;line-height:12px;color:#3a7bd2;left:468.9px;width:600px;text-align:center;">0</div>
<div class="t" id="t81" style="top:829px;font-size:12px;line-height:12px;color:#3a7bd2;left:494.9px;width:600px;text-align:center;">0</div>
<div class="t" id="t82" style="top:829px;font-size:12px;line-height:12px;color:#3a7bd2;left:521.0px;width:600px;text-align:center;">0</div>
<div class="t" id="t83" style="top:829px;font-size:12px;line-height:12px;color:#3a7bd2;left:547.1px;width:600px;text-align:center;">0</div>
<div class="t" id="t84" style="top:829px;font-size:12px;line-height:12px;color:#3a7bd2;left:573.2px;width:600px;text-align:center;">0</div>
<div class="t" id="t85" style="top:731px;font-size:12.5px;line-height:12.5px;color:#3a7bd2;letter-spacing:0.115px;left:599.4px;width:600px;text-align:center;">58 515 000</div>
<div id="tbl1bg"></div>
<div class="hl" style="left:184px;top:922px;width:764px"></div>
<div class="hl" style="left:357px;top:951px;width:591px"></div>
<div class="vl" style="left:607px;top:923px;height:60px"></div>
<div class="hl" style="left:973px;top:922px;width:764px"></div>
<div class="hl" style="left:1146px;top:951px;width:591px"></div>
<div class="vl" style="left:1396px;top:923px;height:60px"></div>
<div class="t" id="t92" style="top:903px;font-size:12px;line-height:12px;color:#363636;letter-spacing:0.078px;left:192.4px;">Месяц</div>
<div class="t" id="t93" style="top:903px;font-size:12px;line-height:12px;color:#363636;letter-spacing:0.088px;left:365.2px;">Сотрудник</div>
<div class="t" id="t94" style="top:902px;font-size:12px;line-height:12px;color:#363636;letter-spacing:0.060px;right:985.2px;">Успешные сделки, период по фильтру</div>
<div class="t" id="t95" style="top:931px;font-size:12px;line-height:12px;color:#363636;letter-spacing:-0.046px;left:192.3px;">февр. 2021 г.</div>
<div class="t" id="t96" style="top:931px;font-size:12px;line-height:12px;color:#363636;letter-spacing:0.128px;left:365.2px;">Логинов Олег</div>
<div class="t" id="t97" style="top:931px;font-size:12px;line-height:12px;color:#363636;letter-spacing:-0.037px;right:985.3px;">60 000 000 <svg class="rub" width="7.5" height="8.7" viewBox="0 0 7.5 8.7" aria-label="₽"><path d="M2.2,8.7 V0.55 H4.6 A2.25,2.25 0 0 1 4.6,5.05 H0.2 M0.2,6.95 H5.4" fill="none" stroke="currentColor" stroke-width="1.15"/></svg></div>
<div class="t" id="t98" style="top:960px;font-size:12px;line-height:12px;color:#212121;font-weight:700;letter-spacing:-0.211px;left:365.0px;">Итого</div>
<div class="t" id="t99" style="top:960px;font-size:12px;line-height:12px;color:#212121;font-weight:700;letter-spacing:0.136px;right:985.3px;">60 000 000 <svg class="rub" width="7.5" height="8.7" viewBox="0 0 7.5 8.7" aria-label="₽"><path d="M2.2,8.7 V0.55 H4.6 A2.25,2.25 0 0 1 4.6,5.05 H0.2 M0.2,6.95 H5.4" fill="none" stroke="currentColor" stroke-width="1.7"/></svg></div>
<div class="t" id="t100" style="top:903px;font-size:12px;line-height:12px;color:#363636;letter-spacing:0.078px;left:981.4px;">Месяц</div>
<div class="t" id="t101" style="top:903px;font-size:12px;line-height:12px;color:#363636;letter-spacing:-0.355px;left:1154.2px;">Отдел</div>
<div class="t" id="t102" style="top:902px;font-size:12px;line-height:12px;color:#363636;letter-spacing:0.060px;right:196.2px;">Успешные сделки, период по фильтру</div>
<div class="t" id="t103" style="top:931px;font-size:12px;line-height:12px;color:#363636;letter-spacing:-0.046px;left:981.3px;">февр. 2021 г.</div>
<div class="t" id="t104" style="top:931px;font-size:12px;line-height:12px;color:#363636;letter-spacing:0.006px;left:1154.2px;">Колл-Центр</div>
<div class="t" id="t105" style="top:931px;font-size:12px;line-height:12px;color:#363636;letter-spacing:-0.037px;right:196.3px;">60 000 000 <svg class="rub" width="7.5" height="8.7" viewBox="0 0 7.5 8.7" aria-label="₽"><path d="M2.2,8.7 V0.55 H4.6 A2.25,2.25 0 0 1 4.6,5.05 H0.2 M0.2,6.95 H5.4" fill="none" stroke="currentColor" stroke-width="1.15"/></svg></div>
<div class="t" id="t106" style="top:960px;font-size:12px;line-height:12px;color:#212121;font-weight:700;letter-spacing:-0.211px;left:1154.0px;">Итого</div>
<div class="t" id="t107" style="top:960px;font-size:12px;line-height:12px;color:#212121;font-weight:700;letter-spacing:0.136px;right:196.3px;">60 000 000 <svg class="rub" width="7.5" height="8.7" viewBox="0 0 7.5 8.7" aria-label="₽"><path d="M2.2,8.7 V0.55 H4.6 A2.25,2.25 0 0 1 4.6,5.05 H0.2 M0.2,6.95 H5.4" fill="none" stroke="currentColor" stroke-width="1.7"/></svg></div>
<div id="topnav"></div>
<div class="t" id="t0" style="top:22px;font-size:14px;line-height:14px;color:#5c5c5c;-webkit-text-stroke:0.35px;letter-spacing:0.428px;left:121.5px;">Светофор Компании</div>
<div class="t" id="t1" style="top:22px;font-size:14px;line-height:14px;color:#5c5c5c;-webkit-text-stroke:0.35px;letter-spacing:0.468px;left:295.6px;">Мобильный отчет</div>
<div class="t" id="t2" style="top:22px;font-size:14px;line-height:14px;color:#5c5c5c;-webkit-text-stroke:0.35px;letter-spacing:0.480px;left:450.6px;">Инструкции + Новости</div>
<div class="t" id="t3" style="top:20px;font-size:14px;line-height:14px;color:#5c5c5c;-webkit-text-stroke:0.35px;letter-spacing:0.494px;left:638.3px;">План-Факт</div>
<div class="t" id="t4" style="top:20px;font-size:14px;line-height:14px;color:#1967d2;-webkit-text-stroke:0.35px;letter-spacing:-0.014px;left:765.4px;">CRM для РОПа</div>
<div class="t" id="t5" style="top:20px;font-size:14px;line-height:14px;color:#5c5c5c;-webkit-text-stroke:0.35px;letter-spacing:0.416px;left:919.5px;">CRM для Маркетолога</div>
<div class="t" id="t6" style="top:20px;font-size:14px;line-height:14px;color:#5c5c5c;-webkit-text-stroke:0.35px;letter-spacing:0.541px;left:1127.2px;">Конверсии</div>
<div class="t" id="t7" style="top:20px;font-size:14px;line-height:14px;color:#5c5c5c;-webkit-text-stroke:0.35px;letter-spacing:0.197px;left:1254.1px;">Задачи</div>
<div class="t" id="t8" style="top:20px;font-size:14px;line-height:14px;color:#5c5c5c;-webkit-text-stroke:0.35px;letter-spacing:-0.176px;left:1355.6px;">Расчёт ЗП</div>
<div class="t" id="t9" style="top:20px;font-size:14px;line-height:14px;color:#5c5c5c;-webkit-text-stroke:0.35px;letter-spacing:0.299px;left:1475.1px;">Прочее</div>
<div class="t" id="t10" style="top:20px;font-size:14px;line-height:14px;color:#5c5c5c;-webkit-text-stroke:0.35px;letter-spacing:0.427px;left:1578.3px;">Уроки. Создаем свои отчеты</div>
<span class="caret" style="left:718.5px;top:26.9px;border-top-color:#555555"></span>
<span class="caret" style="left:873.3px;top:26.9px;border-top-color:#1967d2"></span>
<span class="caret" style="left:1080.7px;top:26.9px;border-top-color:#555555"></span>
<span class="caret" style="left:1207.4px;top:26.9px;border-top-color:#555555"></span>
<span class="caret" style="left:1308.8px;top:26.9px;border-top-color:#555555"></span>
<span class="caret" style="left:1428.3px;top:26.9px;border-top-color:#555555"></span>
<span class="caret" style="left:1531.5px;top:26.9px;border-top-color:#555555"></span>
<span class="caret" style="left:1781.1px;top:26.9px;border-top-color:#555555"></span>
<div id="active-ul"></div>
<div id="scroll"></div>

</div>
</body></html>
